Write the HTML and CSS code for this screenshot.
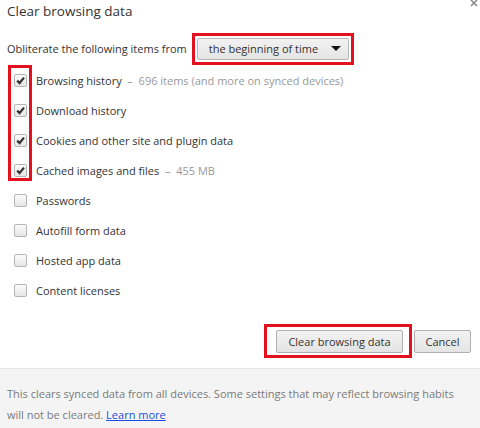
FILE: index.html
```html
<!DOCTYPE html>
<html lang="en">
<head>
<meta charset="UTF-8">
<meta name="viewport" content="width=device-width, initial-scale=1.0">
<title>Clear browsing data</title>
<link rel="stylesheet" href="styles.css">
</head>
<body>
<div class="dialog">
    <div class="title-bar">
        <h1>Clear browsing data</h1>
        <svg class="close" width="8" height="8" viewBox="0 0 8 8">
            <path d="M1 0 L7 6 M7 0 L1 6" stroke="#8a8a8a" stroke-width="1.6"/>
        </svg>
    </div>

    <div class="content">
        <div class="period-row">
            <span>Obliterate the following items from</span>
            <span class="mark mark-select">
                <button class="select">the beginning of time
                    <svg class="arrow" width="10" height="5" viewBox="0 0 10 5"><path d="M0 0 H10 L5 5 Z" fill="#111"/></svg>
                </button>
            </span>
        </div>

        <div class="options">
            <!-- red annotation frame around the ticked boxes -->
            <div class="group marked">
                <div class="option">
                    <span class="box"><svg width="11" height="11" viewBox="0 0 11 11"><path d="M2.2 5.6 L4.6 8 L9 2.6" fill="none" stroke="#333" stroke-width="2.2"/></svg></span>
                    <label>Browsing history <span class="note">&nbsp;&ndash;&nbsp; 696 items (and more on synced devices)</span></label>
                </div>
                <div class="option">
                    <span class="box"><svg width="11" height="11" viewBox="0 0 11 11"><path d="M2.2 5.6 L4.6 8 L9 2.6" fill="none" stroke="#333" stroke-width="2.2"/></svg></span>
                    <label>Download history</label>
                </div>
                <div class="option">
                    <span class="box"><svg width="11" height="11" viewBox="0 0 11 11"><path d="M2.2 5.6 L4.6 8 L9 2.6" fill="none" stroke="#333" stroke-width="2.2"/></svg></span>
                    <label>Cookies and other site and plugin data</label>
                </div>
                <div class="option">
                    <span class="box"><svg width="11" height="11" viewBox="0 0 11 11"><path d="M2.2 5.6 L4.6 8 L9 2.6" fill="none" stroke="#333" stroke-width="2.2"/></svg></span>
                    <label>Cached images and files <span class="note">&nbsp;&ndash;&nbsp; 455 MB</span></label>
                </div>
            </div>
            <div class="group">
                <div class="option">
                    <span class="box"></span>
                    <label>Passwords</label>
                </div>
                <div class="option">
                    <span class="box"></span>
                    <label>Autofill form data</label>
                </div>
                <div class="option">
                    <span class="box"></span>
                    <label>Hosted app data</label>
                </div>
                <div class="option">
                    <span class="box"></span>
                    <label>Content licenses</label>
                </div>
            </div>
        </div>

        <div class="actions">
            <span class="mark mark-button">
                <button class="btn btn-clear">Clear browsing data</button>
            </span>
            <button class="btn btn-cancel">Cancel</button>
        </div>
    </div>

    <div class="footer">
        This clears synced data from all devices. Some settings that may reflect browsing habits will not be cleared. <a href="#">Learn more</a>
    </div>
</div>
</body>
</html>
```

FILE: styles.css
```css
body {
    margin: 0;
    background-color: #fff;
    font-family: "Open Sans", "Noto Sans", sans-serif;
    font-size: 11px;
    color: #333;
}
.dialog {
    width: 480px;
    height: 428px;
    display: flex;
    flex-direction: column;
    overflow: hidden;
}
.title-bar {
    display: flex;
    justify-content: space-between;
    align-items: flex-start;
    height: 24px;
    padding-left: 7px;
    padding-right: 2px;
}
.title-bar h1 {
    margin: 0;
    font-size: 13.5px;
    font-weight: normal;
    line-height: 22px;
    color: #333;
}
.close {
    display: block;
}
.content {
    flex: 1;
}
.mark {
    border: 3px solid #e3101e;
    box-sizing: border-box;
}
.period-row {
    display: flex;
    align-items: center;
    height: 33px;
    margin-top: 8px;
    padding-left: 7px;
}
.mark-select {
    margin-left: 5px;
    padding: 2px;
}
.select {
    display: flex;
    align-items: center;
    justify-content: space-between;
    width: 152px;
    height: 22px;
    padding: 0 7px 0 11px;
    font-family: inherit;
    font-size: 11px;
    color: #333;
    background: linear-gradient(#f2f2f2, #e4e4e4);
    border: 1px solid #b8b8b8;
    border-radius: 2px;
}
.options {
    padding-left: 8px;
}
.group {
    position: relative;
}
.marked::before {
    content: "";
    position: absolute;
    left: 0;
    top: 0;
    width: 24px;
    height: 116px;
    border: 3px solid #e3101e;
    box-sizing: border-box;
}
.option {
    display: flex;
    align-items: center;
    height: 30px;
}
.box {
    width: 13px;
    height: 13px;
    box-sizing: border-box;
    margin-left: 6px;
    margin-right: 9px;
    border: 1px solid #b5b5b5;
    border-radius: 2px;
    background: linear-gradient(#fbfbfb, #e6e6e6);
    display: flex;
    align-items: center;
    justify-content: center;
}
.note {
    color: #999;
}
.actions {
    display: flex;
    justify-content: flex-end;
    align-items: center;
    gap: 2px;
    margin-top: 19px;
    padding-right: 9px;
}
.mark-button {
    padding: 3px 6px 2px 9px;
}
.btn {
    height: 23px;
    padding: 0;
    font-family: inherit;
    font-size: 11px;
    color: #333;
    background: linear-gradient(#f2f2f2, #e4e4e4);
    border: 1px solid #b0b0b0;
    border-radius: 2px;
}
.btn-clear {
    width: 127px;
}
.btn-cancel {
    width: 57px;
}
.footer {
    margin-top: 9px;
    height: 60px;
    flex-shrink: 0;
    box-sizing: border-box;
    padding: 14px 7px 0;
    background-color: #f4f4f4;
    border-top: 1px solid #e6e6e6;
    line-height: 21px;
    color: #7a7a7a;
}
.footer a {
    color: #1a4ee0;
}
```
